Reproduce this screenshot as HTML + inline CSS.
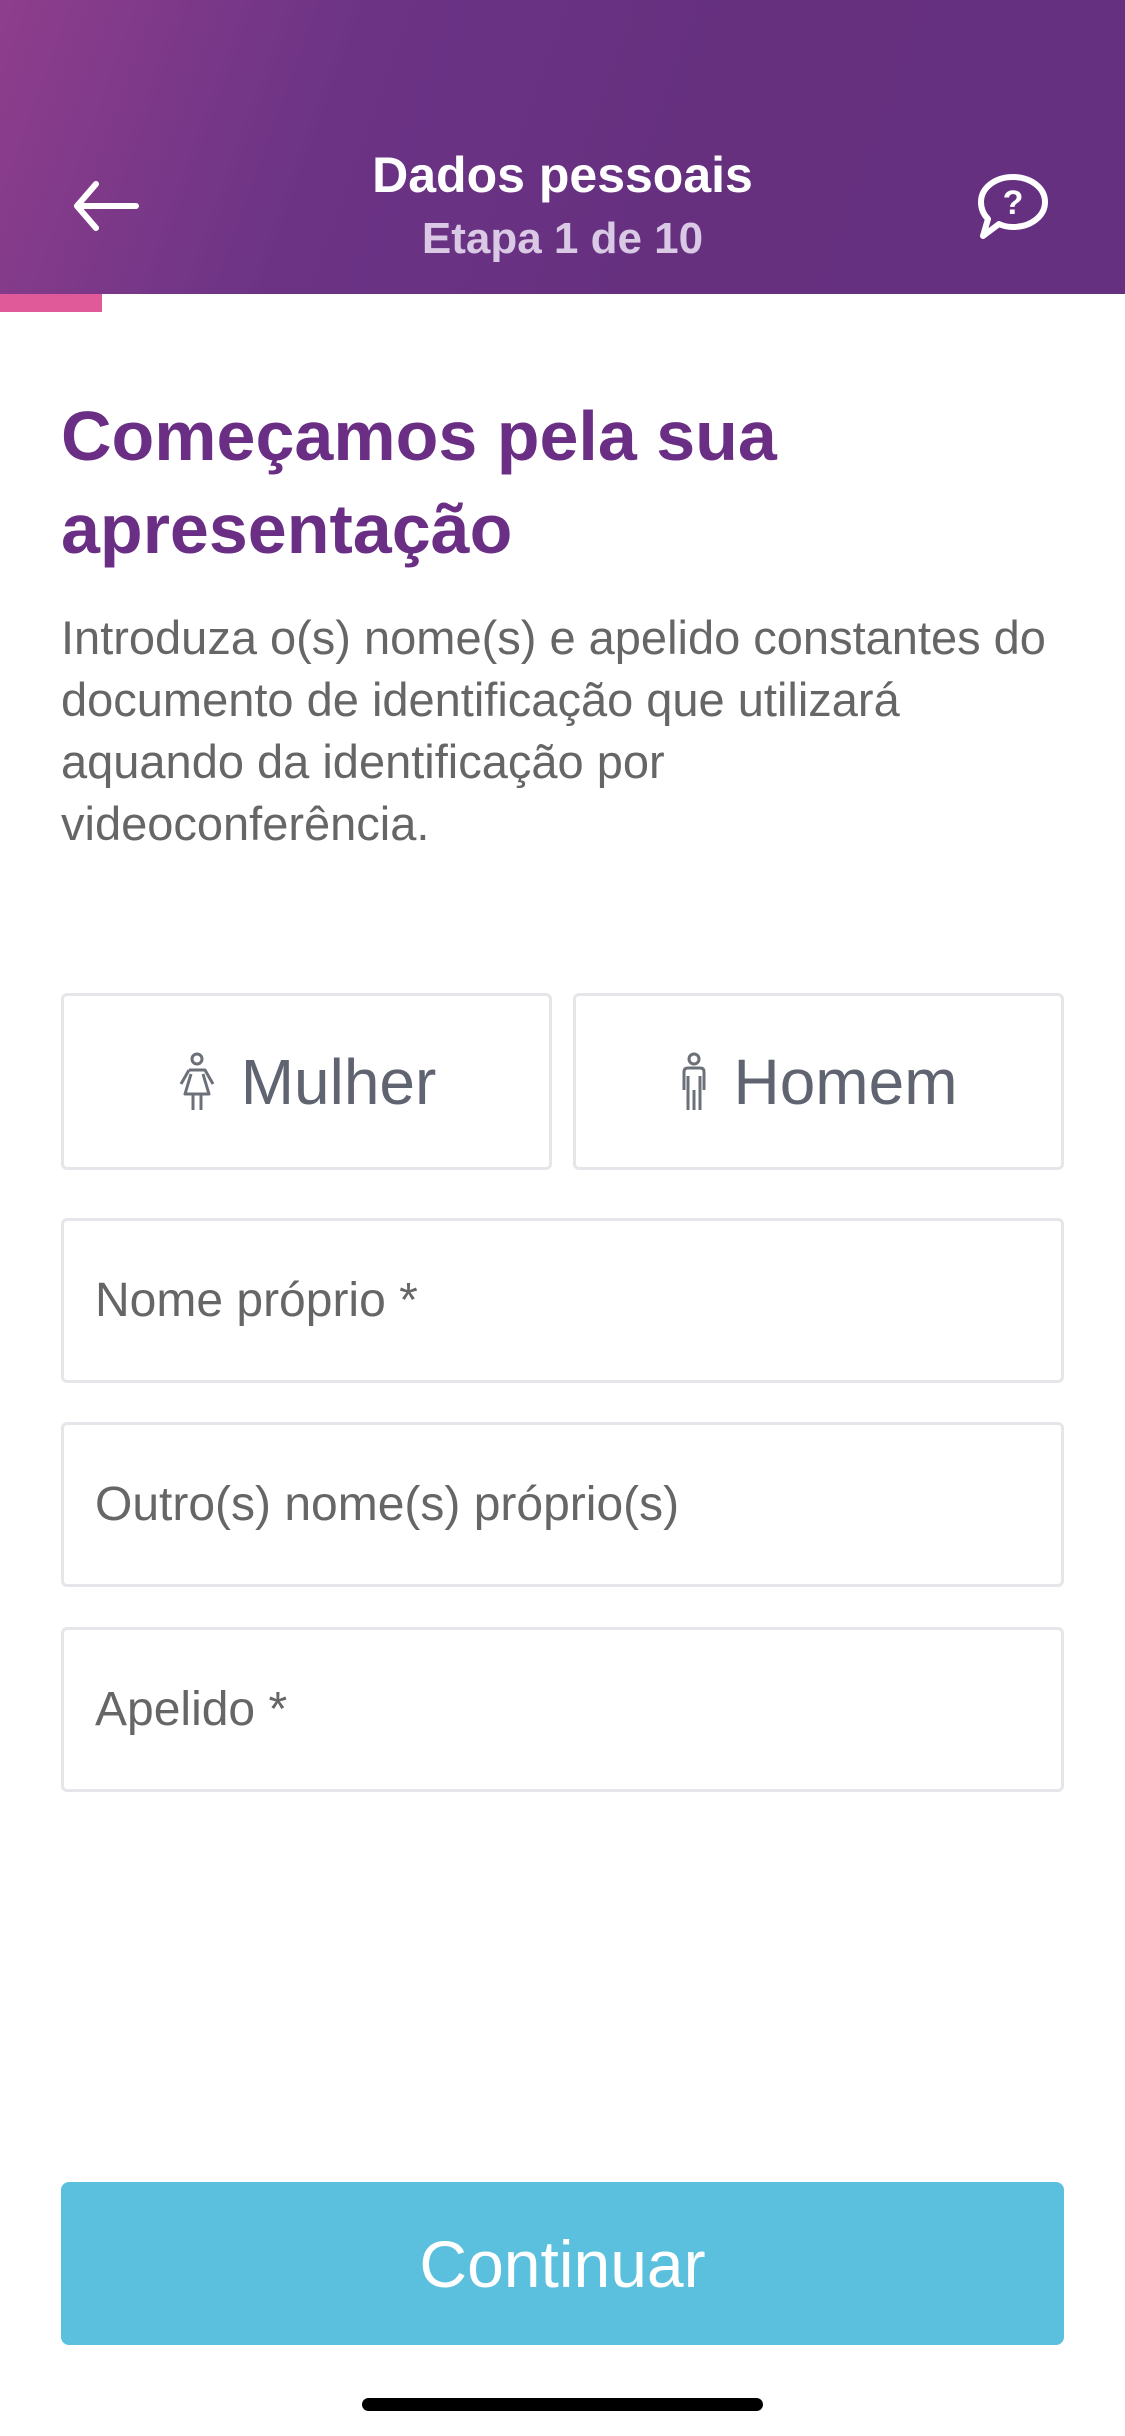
<!DOCTYPE html>
<html><head><meta charset="utf-8"><style>
*{margin:0;padding:0;box-sizing:border-box}
body{width:1125px;height:2436px;background:#fff;font-family:"Liberation Sans",sans-serif;position:relative;overflow:hidden}
.hdr{position:absolute;left:0;top:0;width:1125px;height:294px;background:linear-gradient(110deg,#8e3e8c 0%,#6c3385 30%,#66307f 60%,#663080 100%)}
.pink{position:absolute;left:0;top:294px;width:102px;height:18px;background:#e05a9a}
.t1{position:absolute;left:0;width:1125px;text-align:center;color:#fff;font-size:50px;font-weight:bold;top:146px}
.t2{position:absolute;left:0;width:1125px;text-align:center;color:#d9c9e5;font-size:44px;font-weight:bold;top:214px}
h1{position:absolute;left:61px;top:390px;font-size:70px;line-height:93px;color:#6a2e84;font-weight:bold}
.p{position:absolute;left:61px;top:607px;font-size:47px;line-height:62px;color:#666;white-space:nowrap}
.box{position:absolute;border:3px solid #e6e6ea;border-radius:6px;background:#fff}
.g{display:flex;align-items:center;justify-content:center;font-size:64px;color:#5f6470;gap:24px}
.in{font-size:48px;color:#666;padding-left:31px;display:flex;align-items:center}
.btn{position:absolute;left:61px;top:2182px;width:1003px;height:163px;background:#5bc0de;border-radius:8px;color:#fff;font-size:66px;display:flex;align-items:center;justify-content:center}
.home{position:absolute;left:362px;top:2398px;width:401px;height:13px;border-radius:7px;background:#000}
</style></head><body>
<div class="hdr">
<svg style="position:absolute;left:72px;top:180px" width="68" height="52" viewBox="0 0 68 52"><path d="M64 26H6M24 4L5 26L24 48" fill="none" stroke="#fff" stroke-width="6" stroke-linecap="round" stroke-linejoin="round"/></svg>
<div class="t1">Dados pessoais</div>
<div class="t2">Etapa 1 de 10</div>
<svg style="position:absolute;left:975px;top:172px" width="76" height="70" viewBox="0 0 76 70"><path d="M38 5C56 5 70 16 70 30S56 55 38 55C33 55 28 54 24 52L8 64L13 47C8 42 6 36 6 30C6 16 20 5 38 5Z" fill="none" stroke="#fff" stroke-width="6" stroke-linejoin="round"/><text x="38" y="42" fill="#fff" font-size="34" font-weight="bold" text-anchor="middle" font-family="Liberation Sans">?</text></svg>
</div>
<div class="pink"></div>
<h1>Começamos pela sua<br>apresentação</h1>
<div class="p">Introduza o(s) nome(s) e apelido constantes do<br>documento de identificação que utilizará<br>aquando da identificação por<br>videoconferência.</div>
<div class="box g" style="left:61px;top:993px;width:491px;height:177px">
<svg width="40" height="60" viewBox="0 0 40 60"><circle cx="20" cy="7" r="5" fill="none" stroke="#6b7079" stroke-width="3"/><path d="M12 18H28L36 32M12 18L4 32M14 22L8 42H32L26 22M16 42V58M24 42V58" fill="none" stroke="#6b7079" stroke-width="3" stroke-linejoin="round"/></svg>Mulher</div>
<div class="box g" style="left:573px;top:993px;width:491px;height:177px">
<svg width="30" height="60" viewBox="0 0 30 60"><circle cx="15" cy="7" r="5" fill="none" stroke="#6b7079" stroke-width="3"/><path d="M5 38V20Q5 16 9 16H21Q25 16 25 20V38M9 24V58M21 24V58M15 38V58" fill="none" stroke="#6b7079" stroke-width="3" stroke-linejoin="round"/></svg>Homem</div>
<div class="box in" style="left:61px;top:1218px;width:1003px;height:165px">Nome próprio *</div>
<div class="box in" style="left:61px;top:1422px;width:1003px;height:165px">Outro(s) nome(s) próprio(s)</div>
<div class="box in" style="left:61px;top:1627px;width:1003px;height:165px">Apelido *</div>
<div class="btn">Continuar</div>
<div class="home"></div>
</body></html>
